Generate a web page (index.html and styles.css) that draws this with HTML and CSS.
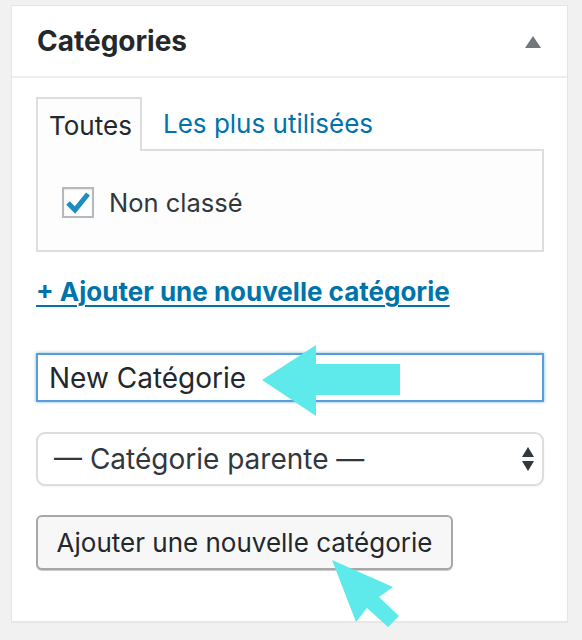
FILE: index.html
```html
<!DOCTYPE html>
<html lang="fr">
<head>
<meta charset="utf-8">
<link rel="stylesheet" href="styles.css">
</head>
<body>
<div class="panel">
  <div class="panel-head">
    <h2 class="panel-title">Catégories</h2>
    <span class="toggle"></span>
  </div>
  <div class="panel-body">
    <div class="tabs">
      <span class="tab active">Toutes</span>
      <span class="tab link">Les plus utilisées</span>
    </div>
    <div class="tab-panel">
      <label class="cat-row">
        <span class="checkbox">
          <svg viewBox="0 0 32 31" width="32" height="31"><polyline points="6,16 13,23 26,7" fill="none" stroke="#1e8cbe" stroke-width="5" stroke-linejoin="miter" stroke-linecap="butt"/></svg>
        </span>
        <span class="cat-label">Non classé</span>
      </label>
    </div>
    <a class="add-link" href="#">+ Ajouter une nouvelle catégorie</a>
    <div class="field text-field">New Catégorie</div>
    <div class="field select-field">
      <span>— Catégorie parente —</span>
      <span class="select-arrows">
        <svg viewBox="0 0 12 24" width="12" height="24"><polygon points="6,0 12,10 0,10" fill="#32373c"/><polygon points="0,14 12,14 6,24" fill="#32373c"/></svg>
      </span>
    </div>
    <button class="btn">Ajouter une nouvelle catégorie</button>
  </div>
</div>
<svg class="annotations" viewBox="0 0 582 640" width="582" height="640">
  <polygon points="262,380 316,345 316,364 400,364 400,395 316,395 316,416" fill="#5eeaea"/>
  <polygon points="332,560 393,587 379,597 399,616 388,627 367,608 356,622" fill="#5eeaea"/>
</svg>
</body>
</html>
```
FILE: styles.css
```css
* { box-sizing: border-box; }
html, body { margin: 0; padding: 0; }
body {
  background: #f1f1f1;
  width: 582px;
  height: 640px;
  position: relative;
  overflow: hidden;
  font-family: Inter, "Noto Sans", sans-serif;
  color: #32373c;
}
.panel {
  margin: 5px 0 0 11px;
  width: 557px;
  height: 617px;
  background: #fff;
  border: 1px solid #e5e5e5;
  box-shadow: 0 1px 1px rgba(0,0,0,.04);
}
.panel-head {
  height: 72px;
  border-bottom: 2px solid #eeeeee;
  display: flex;
  align-items: center;
  justify-content: space-between;
  padding: 0 26px 0 25px;
}
.panel-title {
  margin: 0;
  font-size: 28px;
  font-weight: 700;
  color: #23282d;
  letter-spacing: 0;
}
.toggle {
  width: 0; height: 0;
  border-left: 8px solid transparent;
  border-right: 8px solid transparent;
  border-bottom: 12px solid #72777c;
  margin-top: 2px;
}
.panel-body {
  padding: 19px 23px 0 24px;
}
.tabs {
  display: flex;
  align-items: stretch;
  height: 52px;
}
.tab {
  display: flex;
  align-items: center;
  font-size: 26px;
  padding: 0 11px;
}
.tab.active {
  width: 106px;
  border: 2px solid #dddddd;
  border-bottom: none;
  background: #fdfdfd;
  position: relative;
  margin-bottom: -2px;
  z-index: 1;
  color: #23282d;
}
.tab.link {
  color: #0073aa;
  padding-left: 21px;
}
.tab-panel {
  height: 103px;
  border: 2px solid #dddddd;
  background: #fdfdfd;
  padding: 36px 24px 0 24px;
}
.cat-row {
  display: flex;
  align-items: center;
  gap: 15px;
}
.checkbox {
  width: 32px;
  height: 31px;
  border: 2px solid #b4b9be;
  background: #fff;
  display: flex;
  box-shadow: inset 0 1px 2px rgba(0,0,0,.1);
}
.checkbox svg { margin: -2px; }
.cat-label {
  font-size: 25.5px;
  color: #32373c;
}
.add-link {
  display: inline-block;
  margin-top: 25px;
  font-size: 26px;
  font-weight: 700;
  color: #0073aa;
  text-decoration: underline;
  text-decoration-thickness: 2px;
  text-underline-offset: 4px;
  line-height: 30px;
}
.field {
  width: 508px;
  display: flex;
  align-items: center;
  font-size: 28px;
  color: #32373c;
}
.text-field {
  margin-top: 46px;
  height: 49px;
  border: 2px solid #5b9dd9;
  box-shadow: 0 0 3px rgba(30,140,190,.6);
  padding-left: 11px;
  color: #23282d;
}
.select-field {
  margin-top: 30px;
  height: 54px;
  border: 2px solid #dddddd;
  border-radius: 9px;
  background: #fff;
  justify-content: space-between;
  padding: 0 8px 0 16px;
  box-shadow: 0 1px 2px rgba(0,0,0,.05);
}
.select-arrows { display: flex; }
.btn {
  display: block;
  margin-top: 29px;
  width: 417px;
  height: 55px;
  border: 2px solid #a7a7a7;
  border-radius: 6px;
  background: #f7f7f7;
  box-shadow: 0 1px 0 #ccc;
  font-family: Inter, "Noto Sans", sans-serif;
  font-size: 26px;
  color: #23282d;
  padding: 0;
}
.annotations {
  position: absolute;
  left: 0;
  top: 0;
  pointer-events: none;
}
```
